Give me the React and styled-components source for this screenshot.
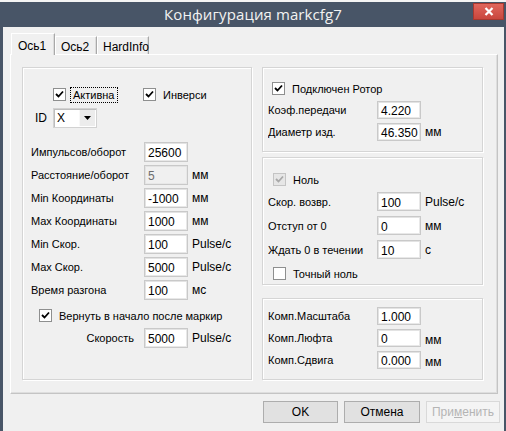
import React from "react"
import styled, { createGlobalStyle } from "styled-components"

const GlobalStyle = createGlobalStyle`
  html, body {
    margin: 0;
    padding: 0;
    background: #f4f4f4;
  }
  body {
    width: 506px;
    height: 431px;
    overflow: hidden;
    font-family: "Liberation Sans", Arial, sans-serif;
    font-size: 11px;
    color: #000;
  }
`

const Window = styled.div`
  margin-top: 2px;
  width: 506px;
  height: 429px;
  background: #485567;
  display: flex;
  flex-direction: column;
`

const TitleBar = styled.div`
  height: 25px;
  display: grid;
  grid-template-columns: 1fr auto 1fr;
  align-items: start;
`

const Title = styled.div`
  grid-column: 2;
  padding-top: 2px;
  font-family: "Open Sans", "Liberation Sans", sans-serif;
  font-size: 15px;
  color: #f2f2f2;
  letter-spacing: 0.1px;
`

const CloseButton = styled.div`
  grid-column: 3;
  justify-self: end;
  margin: 1px 2px 0 0;
  width: 31px;
  height: 17px;
  box-sizing: border-box;
  background: linear-gradient(#e0665c, #c9463d);
  border: 1px solid #a8382f;
  display: flex;
  align-items: center;
  justify-content: center;
`

const Client = styled.div`
  flex: 1;
  margin: 0 2px 0 3px;
  background: #f0f0f0;
  padding-top: 6px;
  display: flex;
  flex-direction: column;
`

const TabStrip = styled.div`
  display: flex;
  align-items: flex-end;
  height: 21px;
  padding-left: 8px;
  position: relative;
  z-index: 1;
`

const Tab = styled.div`
  box-sizing: border-box;
  height: ${(p) => (p.$active ? "22px" : "18px")};
  width: ${(p) => p.$w}px;
  margin-bottom: ${(p) => (p.$active ? "-1px" : "0")};
  padding: ${(p) => (p.$active ? "5px 0 0 6px" : "3px 0 0 5px")};
  background: ${(p) => (p.$active ? "#f0f0f0" : "#f0f0f0")};
  border-top: 1px solid #fff;
  border-left: 1px solid #fff;
  border-right: 1px solid #a9a9a9;
  box-shadow: inset -1px 0 0 #dcdcdc;
  font-size: 12px;
`

const Panel = styled.div`
  box-sizing: border-box;
  margin-left: 7px;
  width: 488px;
  height: 340px;
  border-top: 1px solid #fff;
  border-left: 1px solid #fff;
  border-right: 1px solid #c4c4c4;
  border-bottom: 1px solid #c4c4c4;
  box-shadow: inset -1px -1px 0 #dedede;
  display: flex;
  gap: 10px;
  padding: 12px 0 0 11px;
`

const Group = styled.div`
  box-sizing: border-box;
  width: ${(p) => p.$w}px;
  height: ${(p) => p.$h}px;
  margin-top: ${(p) => p.$mt || 0}px;
  border: 1px solid #d5d5d5;
  box-shadow: inset 1px 1px 0 #fff, 1px 1px 0 #fff;
  padding: ${(p) => p.$pad};
  display: flex;
  flex-direction: column;
`

const RightColumn = styled.div`
  display: flex;
  flex-direction: column;
`

const CheckRow = styled.div`
  display: flex;
  align-items: center;
  height: 15px;
  padding-left: ${(p) => p.$indent || 0}px;
  margin-top: ${(p) => p.$mt || 0}px;
`

const CheckItem = styled.div`
  display: flex;
  align-items: center;
  width: ${(p) => (p.$w ? `${p.$w}px` : "auto")};
`

const Box = styled.div`
  box-sizing: border-box;
  width: 13px;
  height: 13px;
  background: ${(p) => (p.$disabled ? "#e6e6e6" : "#fff")};
  border: 1px solid ${(p) => (p.$disabled ? "#c4c4c4" : "#8e8f8f")};
  display: flex;
  align-items: center;
  justify-content: center;
`

const CheckLabel = styled.span`
  margin-left: 4px;
  padding: 1px 2px;
  border: 1px ${(p) => (p.$focus ? "dotted #000" : "solid transparent")};
  white-space: nowrap;
`

const IdRow = styled.div`
  display: flex;
  align-items: center;
  margin-top: 6px;
  padding-left: 4px;
`

const IdLabel = styled.span`
  width: 18px;
  font-size: 12px;
`

const Combo = styled.div`
  box-sizing: border-box;
  width: 44px;
  height: 20px;
  background: #fff;
  border: 1px solid #d2d2d2;
  box-shadow: inset 1px 1px 0 #bdbdbd;
  display: flex;
  font-size: 12px;
`

const ComboText = styled.span`
  flex: 1;
  padding: 2px 0 0 3px;
`

const ComboArrow = styled.div`
  width: 15px;
  margin: 1px;
  background: #ececec;
  border-left: 1px solid #f8f8f8;
  display: flex;
  align-items: center;
  justify-content: center;
`

const Rows = styled.div`
  display: flex;
  flex-direction: column;
  gap: ${(p) => p.$gap}px;
  margin-top: ${(p) => p.$mt || 0}px;
`

const Row = styled.div`
  display: grid;
  grid-template-columns: ${(p) => p.$label}px 44px auto;
  align-items: center;
  height: ${(p) => p.$h}px;
`

const Label = styled.span`
  white-space: nowrap;
  overflow: hidden;
  text-align: ${(p) => (p.$right ? "right" : "left")};
  padding-right: ${(p) => (p.$right ? "10px" : "0")};
`

const Input = styled.div`
  box-sizing: border-box;
  height: 100%;
  background: ${(p) => (p.$disabled ? "#f0f0f0" : "#fff")};
  color: ${(p) => (p.$disabled ? "#6d6d6d" : "#000")};
  border: 1px solid #c9c9c9;
  box-shadow: inset 1px 1px 0 #e3e3e3, inset -1px -1px 0 #e8e8e8;
  padding: 2px 0 0 3px;
  font-size: 12px;
  display: flex;
  align-items: center;
`

const Unit = styled.span`
  margin-left: 4px;
  align-self: ${(p) => (p.$low ? "end" : "center")};
  font-size: 12px;
`

const ButtonRow = styled.div`
  display: flex;
  justify-content: flex-end;
  gap: 6px;
  margin-top: 7px;
  padding-right: 4px;
`

const Button = styled.div`
  box-sizing: border-box;
  width: ${(p) => p.$w}px;
  height: 22px;
  background: ${(p) => (p.$disabled ? "#f4f4f4" : "#e1e1e1")};
  border: 1px solid ${(p) => (p.$disabled ? "#d9d9d9" : "#adadad")};
  color: ${(p) => (p.$disabled ? "#b4b4b4" : "#000")};
  display: flex;
  align-items: center;
  justify-content: center;
  font-size: 12px;
`

const Check = ({ disabled }) => (
  <svg width="9" height="9" viewBox="0 0 9 9">
    <path d="M1 4 L3.5 6.5 L8 1.5" fill="none" stroke={disabled ? "#a8a8a8" : "#000"} strokeWidth="1.8" />
  </svg>
)

const CheckBox = ({ checked, disabled, label, focus, w }) => (
  <CheckItem $w={w}>
    <Box $disabled={disabled}>{checked && <Check disabled={disabled} />}</Box>
    <CheckLabel $focus={focus}>{label}</CheckLabel>
  </CheckItem>
)

const leftRows = [
  ["Импульсов/оборот", "25600", ""],
  ["Расстояние/оборот", "5", "мм", true],
  ["Min Координаты", "-1000", "мм"],
  ["Max Координаты", "1000", "мм"],
  ["Min Скор.", "100", "Pulse/c"],
  ["Max Скор.", "5000", "Pulse/c"],
  ["Время разгона", "100", "мс"],
]

const App = () => (
  <>
    <GlobalStyle />
    <Window>
      <TitleBar>
        <Title>Конфигурация markcfg7</Title>
        <CloseButton>
          <svg width="10" height="9" viewBox="0 0 10 9">
            <path d="M1.5 1 L8.5 8 M8.5 1 L1.5 8" stroke="#fff" strokeWidth="2.2" />
          </svg>
        </CloseButton>
      </TitleBar>
      <Client>
        <TabStrip>
          <Tab $active $w={44}>Ось1</Tab>
          <Tab $w={42}>Ось2</Tab>
          <Tab $w={52}>HardInfo</Tab>
        </TabStrip>
        <Panel>
          <Group $w={230} $h={313} $pad="19px 0 0 8px">
            <CheckRow $indent={22}>
              <CheckBox checked label="Активна" focus w={90} />
              <CheckBox checked label="Инверси" />
            </CheckRow>
            <IdRow>
              <IdLabel>ID</IdLabel>
              <Combo>
                <ComboText>X</ComboText>
                <ComboArrow>
                  <svg width="7" height="4" viewBox="0 0 7 4">
                    <path d="M0 0 H7 L3.5 4 Z" fill="#000" />
                  </svg>
                </ComboArrow>
              </Combo>
            </IdRow>
            <Rows $gap={3} $mt={14}>
              {leftRows.map(([label, value, unit, disabled]) => (
                <Row key={label} $label={113} $h={20}>
                  <Label>{label}</Label>
                  <Input $disabled={disabled}>{value}</Input>
                  <Unit>{unit}</Unit>
                </Row>
              ))}
            </Rows>
            <CheckRow $indent={8} $mt={8}>
              <CheckBox checked label="Вернуть в начало после маркир" />
            </CheckRow>
            <Rows $gap={0} $mt={5}>
              <Row $label={113} $h={20}>
                <Label $right>Скорость</Label>
                <Input>5000</Input>
                <Unit>Pulse/c</Unit>
              </Row>
            </Rows>
          </Group>
          <RightColumn>
            <Group $w={221} $h={85} $pad="13px 0 0 5px">
              <CheckRow $indent={4}>
                <CheckBox checked label="Подключен Ротор" />
              </CheckRow>
              <Rows $gap={4} $mt={5}>
                <Row $label={109} $h={18}>
                  <Label>Коэф.передачи</Label>
                  <Input>4.220</Input>
                  <Unit />
                </Row>
                <Row $label={109} $h={18}>
                  <Label>Диаметр изд.</Label>
                  <Input>46.350</Input>
                  <Unit>мм</Unit>
                </Row>
              </Rows>
            </Group>
            <Group $w={221} $h={128} $mt={5} $pad="14px 0 0 5px">
              <CheckRow $indent={5}>
                <CheckBox checked disabled label="Ноль" />
              </CheckRow>
              <Rows $gap={5} $mt={5}>
                <Row $label={109} $h={19}>
                  <Label>Скор. возвр.</Label>
                  <Input>100</Input>
                  <Unit>Pulse/c</Unit>
                </Row>
                <Row $label={109} $h={19}>
                  <Label>Отступ от 0</Label>
                  <Input>0</Input>
                  <Unit>мм</Unit>
                </Row>
                <Row $label={109} $h={19}>
                  <Label>Ждать 0 в течении</Label>
                  <Input>10</Input>
                  <Unit>с</Unit>
                </Row>
              </Rows>
              <CheckRow $indent={5} $mt={7}>
                <CheckBox label="Точный ноль" />
              </CheckRow>
            </Group>
            <Group $w={221} $h={82} $mt={13} $pad="8px 0 0 5px">
              <Rows $gap={4}>
                <Row $label={109} $h={18}>
                  <Label>Комп.Масштаба</Label>
                  <Input>1.000</Input>
                  <Unit />
                </Row>
                <Row $label={109} $h={18}>
                  <Label>Комп.Люфта</Label>
                  <Input>0</Input>
                  <Unit $low>мм</Unit>
                </Row>
                <Row $label={109} $h={18}>
                  <Label>Комп.Сдвига</Label>
                  <Input>0.000</Input>
                  <Unit $low>мм</Unit>
                </Row>
              </Rows>
            </Group>
          </RightColumn>
        </Panel>
        <ButtonRow>
          <Button $w={75}>OK</Button>
          <Button $w={76}>Отмена</Button>
          <Button $w={74} $disabled>
            <span>
              При<u>м</u>енить
            </span>
          </Button>
        </ButtonRow>
      </Client>
    </Window>
  </>
)

export default App
